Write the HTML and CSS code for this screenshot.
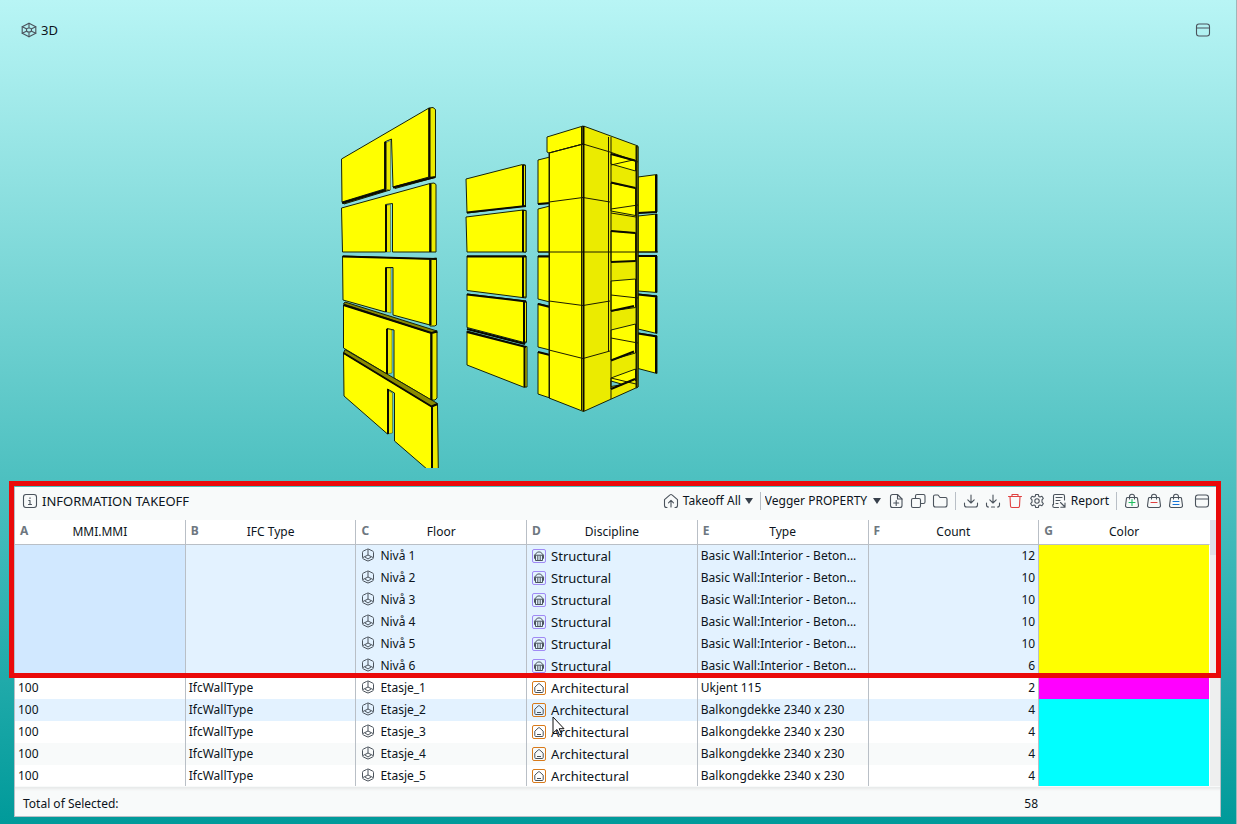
FILE: index.html
```html
<!DOCTYPE html>
<html lang="en">
<head>
<meta charset="utf-8">
<title>Information Takeoff</title>
<link rel="stylesheet" href="styles.css">
</head>
<body>
<svg class="defs" aria-hidden="true">
  <symbol id="i-window" viewBox="0 0 16 16"><rect x="1.5" y="2" width="13" height="12" rx="2.5"/><path d="M1.5 6h13"/></symbol>
  <symbol id="i-3d" viewBox="0 0 16 16"><path d="M8 1.200l6.800 3.600v6.400L8 14.800l-6.800-3.600V4.800z"/><path d="M8 1.200v4.600M8 10.200v4.600M1.200 4.800L14.800 11.200M14.800 4.800L1.200 11.200"/><ellipse class="hub" cx="8" cy="8" rx="2.600" ry="2"/></symbol>
  <symbol id="i-info" viewBox="0 0 16 16"><rect x="1.500" y="1.500" width="13" height="13" rx="2.500"/><path d="M6.800 7.500H8v4M6.500 11.500h3M8 4.800v.7"/></symbol>
  <symbol id="i-takeoff" viewBox="0 0 16 16"><path d="M4 14.500H3.500a2 2 0 0 1-2-2V6.600L7 1.900a1.500 1.500 0 0 1 2 0l5.500 4.700v5.900a2 2 0 0 1-2 2H12"/><path d="M8 14V7.500M5.500 9.800L8 7.300l2.500 2.500"/></symbol>
  <symbol id="i-new" viewBox="0 0 16 16"><path d="M9.500 1.500h-5a2 2 0 0 0-2 2v9a2 2 0 0 0 2 2h7.500a2 2 0 0 0 2-2V6z"/><path d="M9.500 1.500V6H14M8.200 7.500v5M5.700 10h5"/></symbol>
  <symbol id="i-copy" viewBox="0 0 16 16"><path d="M5.500 5.500V3a1.500 1.500 0 0 1 1.500-1.500h6.500A1.500 1.500 0 0 1 15 3v6a1.500 1.500 0 0 1-1.500 1.500h-3"/><rect x="1.500" y="5.500" width="9" height="9" rx="1.500"/></symbol>
  <symbol id="i-folder" viewBox="0 0 16 16"><path d="M1.500 12V3.500A1.500 1.500 0 0 1 3 2h3l2 2.500h5.500A1.500 1.500 0 0 1 15 6v6a2 2 0 0 1-2 2H3.500a2 2 0 0 1-2-2z"/></symbol>
  <symbol id="i-down" viewBox="0 0 16 16"><path d="M8 2v8M4.800 6.800L8 10l3.200-3.200M1.500 10v2a2 2 0 0 0 2 2h9a2 2 0 0 0 2-2v-2"/></symbol>
  <symbol id="i-downdash" viewBox="0 0 16 16"><path d="M8 2v8M4.800 6.800L8 10l3.200-3.200M1.500 10v2a2 2 0 0 0 2 2M14.500 10v2a2 2 0 0 1-2 2M6.500 14h3"/></symbol>
  <symbol id="i-trash" viewBox="0 0 16 16"><path d="M1.500 3.500h13M5 3.500v-2h6v2M3 3.500l.5 9.500a1.500 1.500 0 0 0 1.500 1.500h6a1.500 1.500 0 0 0 1.500-1.500L13 3.500"/></symbol>
  <symbol id="i-gear" viewBox="0 0 16 16"><path d="M6.700 1.500h2.600l.5 1.900 1.200.6 1.900-.7 1.400 2-1.300 1.600v2.200l1.300 1.600-1.400 2-1.900-.7-1.200.6-.5 1.900H6.700l-.5-1.900-1.200-.6-1.900.7-1.400-2L3 9.100V6.900L1.700 5.300l1.400-2 1.900.7 1.200-.6z"/><circle cx="8" cy="8" r="2.200"/></symbol>
  <symbol id="i-report" viewBox="0 0 16 16"><path d="M13.500 7V3A1.500 1.500 0 0 0 12 1.500H4A1.500 1.500 0 0 0 2.500 3v8.500H1.800v1.500A1.500 1.500 0 0 0 3.300 14.500H7.500M5 4.500h6M5 7.500h4M5 10.500h2M9.500 9.500l4.500 4.500M14 10v4.200H9.800"/></symbol>
  <symbol id="i-bag" viewBox="0 0 16 16"><path d="M3.500 4.500h9a1 1 0 0 1 1 .8l1 7.200a1.800 1.800 0 0 1-1.800 2H3.300a1.800 1.800 0 0 1-1.800-2l1-7.200a1 1 0 0 1 1-.8zM5.500 6V3.700a2.500 2.500 0 0 1 5 0V6"/></symbol>
  <symbol id="i-floor" viewBox="0 0 14 14"><path d="M5.500 1.500L2.500 3a1.500 1.500 0 0 0-1 1.400v5.200A1.500 1.500 0 0 0 2.500 11L6 12.700a2 2 0 0 0 2 0L11.500 11a1.500 1.500 0 0 0 1-1.400V4.400a1.500 1.500 0 0 0-1-1.400L8 1.300a2 2 0 0 0-2 0zM7 1.500v5.500M2 9.500l5-2.500 5 2.500M4 9l3 2 3-2"/></symbol>
  <symbol id="i-str" viewBox="0 0 16 16"><rect class="tile" x="1.500" y="1.500" width="13" height="13" rx="1.500"/><path d="M3.500 7.200L6.500 4h3l3 3.200zM4.500 7.200v5.300h7V7.200M6.800 7.500v5M9.200 7.500v5M3.500 7.200v3.500M12.500 7.200v3.500"/></symbol>
  <symbol id="i-arc" viewBox="0 0 16 16"><rect class="tile" x="1.500" y="1.500" width="13" height="13" rx="1.500"/><path d="M3.800 11.500V7.200L7.200 4a1.200 1.200 0 0 1 1.600 0l3.400 3.200v4.300a1 1 0 0 1-1 1H4.800a1 1 0 0 1-1-1zM6 10.500h4"/></symbol>
</svg>

<main class="app">
  <section class="viewer">
    <header class="viewer-head">
      <svg class="icon"><use href="#i-3d"/></svg>
      <h1 class="title">3D</h1>
      <button class="tool push" aria-label="Maximize view"><svg class="icon"><use href="#i-window"/></svg></button>
    </header>
    <svg class="model" viewBox="330 100 340 368" role="img" aria-label="3D model of selected walls">
      <g class="f">
        <path class="o" d="M342 202l44-13 4 1-46 14zM393 186l36-9 6 .5-40 11z"/>
        <path d="M341.500 159L429 108v69l-36 10-1.500-48-7 3v47L342 202z"/>
        <path class="s" d="M429 108l4-.5 2.500 2v68l-6.500-.5z"/>
        <path class="s e" d="M385 143l5.500-2.500V190l-5.500-.5z"/>
        <path d="M341.500 208L430 183.500V252h-37.500v-48.500l-7 1V252h-43z"/>
        <path class="s" d="M430 183.500l4-.5 2 1.500V252h-6z"/>
        <path class="s e" d="M385.500 205.500l5-1V252h-5z"/>
        <path d="M342.500 256l87.500 3v66l-37-10v-47.500h-7.500V312L343 300z"/>
        <path class="s" d="M430 259l6.500-1v67l-2 1h-4.500z"/>
        <path class="s e" d="M386 268h5v45l-5-1z"/>
        <path d="M343.500 305l87.500 28v67l-37-22v-48l-7-1.500V374l-43.500-26z"/>
        <path class="s" d="M431 333l6-1v66l-2 2h-4z"/>
        <path class="s e" d="M387 329l5 1v43l-5 1z"/>
        <path class="o" d="M343.500 304l1.500-2 92 29-6 2z"/>
        <path d="M343.500 353l88 53v67L394.500 441v-48l-7-4v45L344 396z"/>
        <path class="s" d="M431.500 406.500l6-2 .8 65h-6.800z"/>
        <path class="s e" d="M387.500 390l5 3v40l-5 1z"/>
        <path class="o" d="M343.500 353l1.500-3.500 92.500 54-6 3z"/>
      </g>
      <g class="k">
        <path d="M342 203l44-13M393 187.500l42-10.500M429.500 108v69M385.500 142v47M430.500 184v68M386 205v47M343 256.500l93 2.500M430.500 259v66M386 268v44M343.500 305l88 28 6-1.500M431.500 333v67M387 329v45M343.500 353l88 53.500 6-2.500M432 406v62M388 389v45"/>
      </g>
      <g class="f">
        <path d="M466 179l56.500-14.500 3 .5v41L467 213z"/><path d="M466 217l57-7 3 .5V252h-59z"/>
        <path d="M467 256h59v42l-59-7.500z"/><path d="M467 294l59 7v42l-59-15.500z"/><path d="M467 331l59.500 16v39l-2 1.500L467 365z"/>
        <path class="s" d="M523.500 165l2 .5v41h-2zM523.500 210.500h2.500V252h-2.500zM523.500 256h2.500v41h-2.500zM524 301.500l2.500.5v40H524zM524.500 347l2.500-.5V387h-2.500z"/>
        <path d="M538 160l12-3v46.500l-12 .5zM538 209l12-3v46h-12zM538 256h12v46l-12-3zM538 303.500l12 3V350l-12-3zM538 352l12 3v43l-12-4z"/>
        <path d="M638 177l19-2.500V212l-19 1zM638 216l19-2v38h-19zM638 255.500l19 .5v36.500l-19-1.500zM638 294l19 2v37.500l-19-4.500zM638 333l19 3v37.500l-19-5z"/>
      </g>
      <g class="k">
        <path d="M467 212.500l59-6.500M523 165v42M523 210v42M467 256.500h59M523 256v42M467 294.500l59 7M524 301v42M467 332l59 15M524.500 347v40M467 329l58 15M538 204l12-1M538 256.500h12M538 304l12 3M538 352l12 3M638 213l19-1M656 175v37M656 214v38M638 256h19M656 256v36M638 294.500l19 2M656 296v37M638 333.500l19 3M656 336v37"/>
      </g>
      <g class="f">
        <path d="M547 137l36-11v18l-34 9-2-1z"/>
        <path d="M549 153l34.500-9v267.500L549 398z"/>
        <path class="s" d="M583.500 126l54.500 20v241l-54.500 24.500z"/>
        <path d="M611 154l24.500 7v10L611 164zM611 183l24.500 5v27.500l-24.500-4.500zM611 231l24.500 2v28.500H611zM611 281l24.500-2v28.500L611 311zM611 330l24.500-6v29L611 360zM611 378l24.500-9v10L611 389z"/>
        <path class="sky" d="M611 381l12 3.500-12 2z"/>
        <path class="o" d="M636 146l2 1v240l-2 1z"/>
      </g>
      <g class="l">
        <path d="M549 153l34-9 27 8 28 10M549 202l34-4.500 27 4.500M538 252h120M549 301l34 4.500 27-4.500M549 350l34 8.500 27-7.500M549.500 153v245M608.500 137v214M611 137v262M635.500 160v11M635.500 188v28M635.500 233v28M635.500 279v28M635.500 324v29M635.500 369v12M611 165l22-5M611 209l27-4M611 213l25 4M611 295l27 3M611 338l27 5M611 378l25 6M636.500 146v241M581.500 127v283"/>
      </g>
      <g class="k">
        <path d="M583.500 126v285M611 154l24 6.500M611 182.500l24.500 5.500M611 231l24.500 2M611 262l24.500-1M611 311l23-5M611 360.500l23-9M611 389l24-10"/>
      </g>
    </svg>
  </section>

  <section class="panel" aria-label="Information takeoff">
    <header class="bar">
      <svg class="icon"><use href="#i-info"/></svg>
      <h2 class="title">INFORMATION TAKEOFF</h2>
      <button class="tool text push" aria-haspopup="menu"><svg class="icon"><use href="#i-takeoff"/></svg><span>Takeoff All</span><svg class="caret" viewBox="0 0 8 6"><path d="M0 0h8L4 6z"/></svg></button>
      <span class="sep"></span>
      <label class="pick"><select aria-label="Takeoff definition"><option>Vegger PROPERTY</option></select><svg class="caret" viewBox="0 0 8 6"><path d="M0 0h8L4 6z"/></svg></label>
      <button class="tool" aria-label="New"><svg class="icon"><use href="#i-new"/></svg></button>
      <button class="tool" aria-label="Copy"><svg class="icon"><use href="#i-copy"/></svg></button>
      <button class="tool" aria-label="Open"><svg class="icon"><use href="#i-folder"/></svg></button>
      <span class="sep"></span>
      <button class="tool" aria-label="Import"><svg class="icon"><use href="#i-down"/></svg></button>
      <button class="tool" aria-label="Import selected"><svg class="icon"><use href="#i-downdash"/></svg></button>
      <button class="tool red" aria-label="Delete"><svg class="icon"><use href="#i-trash"/></svg></button>
      <button class="tool" aria-label="Settings"><svg class="icon"><use href="#i-gear"/></svg></button>
      <button class="tool text"><svg class="icon"><use href="#i-report"/></svg><span>Report</span></button>
      <span class="sep"></span>
      <button class="tool" aria-label="Add to basket"><svg class="icon" viewBox="0 0 16 16"><use href="#i-bag"/><path class="plus" d="M8 6.500v6M5 9.500h6"/></svg></button>
      <button class="tool" aria-label="Remove from basket"><svg class="icon" viewBox="0 0 16 16"><use href="#i-bag"/><path class="minus" d="M5 9.500h6"/></svg></button>
      <button class="tool" aria-label="Set basket"><svg class="icon" viewBox="0 0 16 16"><use href="#i-bag"/><path class="equal" d="M5 8.500h6M5 11.500h6"/></svg></button>
      <button class="tool last" aria-label="Maximize panel"><svg class="icon"><use href="#i-window"/></svg></button>
    </header>

    <div class="sheet">
      <div class="gridbox">
      <table class="grid">
        <thead><tr>
          <th><div class="col"><b>A</b><span>MMI.MMI</span></div></th><th><div class="col"><b>B</b><span>IFC Type</span></div></th><th><div class="col"><b>C</b><span>Floor</span></div></th><th><div class="col"><b>D</b><span>Discipline</span></div></th><th><div class="col"><b>E</b><span>Type</span></div></th><th><div class="col"><b>F</b><span>Count</span></div></th><th><div class="col"><b>G</b><span>Color</span></div></th>
        </tr></thead>
        <tbody>
          <tr class="on"><td class="focus"></td><td></td><td><svg class="fl"><use href="#i-floor"/></svg>Nivå 1</td><td class="disc"><svg class="di st"><use href="#i-str"/></svg>Structural</td><td>Basic Wall:Interior - Beton...</td><td class="num">12</td><td class="yellow"></td></tr>
          <tr class="on"><td class="focus"></td><td></td><td><svg class="fl"><use href="#i-floor"/></svg>Nivå 2</td><td class="disc"><svg class="di st"><use href="#i-str"/></svg>Structural</td><td>Basic Wall:Interior - Beton...</td><td class="num">10</td><td class="yellow"></td></tr>
          <tr class="on"><td class="focus"></td><td></td><td><svg class="fl"><use href="#i-floor"/></svg>Nivå 3</td><td class="disc"><svg class="di st"><use href="#i-str"/></svg>Structural</td><td>Basic Wall:Interior - Beton...</td><td class="num">10</td><td class="yellow"></td></tr>
          <tr class="on"><td class="focus"></td><td></td><td><svg class="fl"><use href="#i-floor"/></svg>Nivå 4</td><td class="disc"><svg class="di st"><use href="#i-str"/></svg>Structural</td><td>Basic Wall:Interior - Beton...</td><td class="num">10</td><td class="yellow"></td></tr>
          <tr class="on"><td class="focus"></td><td></td><td><svg class="fl"><use href="#i-floor"/></svg>Nivå 5</td><td class="disc"><svg class="di st"><use href="#i-str"/></svg>Structural</td><td>Basic Wall:Interior - Beton...</td><td class="num">10</td><td class="yellow"></td></tr>
          <tr class="on"><td class="focus"></td><td></td><td><svg class="fl"><use href="#i-floor"/></svg>Nivå 6</td><td class="disc"><svg class="di st"><use href="#i-str"/></svg>Structural</td><td>Basic Wall:Interior - Beton...</td><td class="num">6</td><td class="yellow"></td></tr>
          <tr><td>100</td><td>IfcWallType</td><td><svg class="fl"><use href="#i-floor"/></svg>Etasje_1</td><td class="disc"><svg class="di ar"><use href="#i-arc"/></svg>Architectural</td><td>Ukjent 115</td><td class="num">2</td><td class="magenta"></td></tr>
          <tr class="on"><td>100</td><td>IfcWallType</td><td><svg class="fl"><use href="#i-floor"/></svg>Etasje_2</td><td class="disc"><svg class="di ar"><use href="#i-arc"/></svg>Architectural</td><td>Balkongdekke 2340 x 230</td><td class="num">4</td><td class="cyan"></td></tr>
          <tr><td>100</td><td>IfcWallType</td><td><svg class="fl"><use href="#i-floor"/></svg>Etasje_3</td><td class="disc"><svg class="di ar"><use href="#i-arc"/></svg>Architectural</td><td>Balkongdekke 2340 x 230</td><td class="num">4</td><td class="cyan"></td></tr>
          <tr class="alt"><td>100</td><td>IfcWallType</td><td><svg class="fl"><use href="#i-floor"/></svg>Etasje_4</td><td class="disc"><svg class="di ar"><use href="#i-arc"/></svg>Architectural</td><td>Balkongdekke 2340 x 230</td><td class="num">4</td><td class="cyan"></td></tr>
          <tr><td>100</td><td>IfcWallType</td><td><svg class="fl"><use href="#i-floor"/></svg>Etasje_5</td><td class="disc"><svg class="di ar"><use href="#i-arc"/></svg>Architectural</td><td>Balkongdekke 2340 x 230</td><td class="num">4</td><td class="cyan"></td></tr>
        </tbody>
      </table>
      </div>
      <div class="scroll"><div class="thumb"></div></div>
    </div>

    <footer class="totals"><span>Total of Selected:</span><span class="sum">58</span></footer>
    <div class="frame"></div>
    <svg class="cursor" viewBox="0 0 13 21"><path d="M1 1v16l4-3.500 2.500 5.500 2-1-2.300-5.300H12z"/></svg>
  </section>
</main>
</body>
</html>
```
FILE: styles.css
```css
* { box-sizing: border-box; }
body { margin: 0; font: 12px/18px "Noto Sans", sans-serif; color: #0c1420; }
.defs { position: absolute; width: 0; height: 0; }
.app {
  display: flex; flex-direction: column; min-height: 100vh;
  padding: 0 15px 7px 14px;
  border-right: 1px solid #9fb5b8;
  background: linear-gradient(#b8f5f5, #009a9a);
}
.viewer { flex: 1; display: flex; flex-direction: column; }
.viewer-head { display: flex; align-items: center; gap: 4px; height: 60px; padding: 0 7px; }
.title { margin: 0; font-size: 13px; font-weight: 400; }
.push { margin-left: auto; }
.model { width: 340px; height: 368px; margin: 40px 0 0 316px; stroke-linejoin: round; }
.f { fill: #ffff00; stroke: #16220a; stroke-width: 1; }
.s { fill: #ebeb00; }
.e { stroke-width: .4; }
.o { fill: #8a8a00; }
.sky { fill: #6ccaca; }
.k { fill: none; stroke: #0a0a00; stroke-width: 2; }
.l { fill: none; stroke: #1c1c00; stroke-width: 1; }

.icon { width: 16px; height: 16px; flex: none; fill: none; stroke: #4b535c; stroke-width: 1.1px; stroke-linecap: round; stroke-linejoin: round; }
.hub { fill: #b0f0f0; }
.caret { width: 8px; height: 6px; fill: #37404b; }
.panel { position: relative; border: 1px solid #b9bfc6; border-top: 0; background: #f8fafa; }
.bar { display: flex; align-items: center; height: 33px; padding: 0 7px 5px; }
.bar .title { margin-left: 4px; }
.tool { display: flex; align-items: center; justify-content: center; width: 22px; height: 22px; padding: 0; border: 0; background: none; font: inherit; color: inherit; }
.tool.text { width: auto; gap: 4px; padding: 0 3px; }
.red .icon { stroke: #e04040; }
.icon .plus { stroke: #1fbf5f; }
.icon .minus { stroke: #e04040; }
.icon .equal { stroke: #1673d6; }
.sep { width: 1px; height: 18px; margin: 0 4px; background: #b9bfc6; }
.pick { display: flex; align-items: center; gap: 5px; margin-right: 4px; }
.pick select { appearance: none; padding: 0; border: 0; background: none; font: inherit; color: inherit; }
.last { margin-left: 4px; }

.sheet { display: flex; height: 266px; overflow: hidden; }
.gridbox { flex: 1; min-width: 0; }
.grid { width: 100%; table-layout: fixed; border-collapse: separate; border-spacing: 0; background: #fff; }
.grid th { height: 25px; padding: 0; border-right: 1px solid #b9bfc6; border-bottom: 1px solid #b9bfc6; font-weight: 400; }
.col { display: grid; grid-template-columns: 16px 1fr 16px; padding: 0 5px; }
.col b { line-height: 22px; color: #6e7780; text-align: left; }
.col span { line-height: 24px; }
.grid td { height: 22px; padding: 0 3px; border-right: 1px solid #b9bfc6; white-space: nowrap; overflow: hidden; line-height: 22px; }
.grid th:last-child, .grid td:last-child { border-right-color: #fff; }
.grid .disc { font-size: 13px; }
.on { background: #e3f2ff; }
.alt { background: #f8fafa; }
.grid td.focus { background: #d1e8ff; }
.grid .num { text-align: right; }
.yellow { background: #ffff00; background-clip: padding-box; }
.magenta { background: #ff00ff; background-clip: padding-box; }
.cyan { background: #00ffff; background-clip: padding-box; }
.fl, .di { vertical-align: middle; fill: none; stroke: #4b535c; stroke-width: 1px; }
.fl { width: 14px; height: 14px; margin: 0 5px 3px 2px; }
.di { width: 16px; height: 16px; margin: 0 4px 3px 1px; }
.st { --tile: #a08af5; }
.ar { --tile: #d97a1a; }
.tile { stroke: var(--tile); }
.scroll { width: 10px; background: #eeefef; }
.thumb { height: 35px; background: #dfe1e6; }

.totals { display: flex; height: 30px; padding: 5px 182px 0 8px; border-top: 1px solid #f8fafa; box-shadow: inset 0 4px 3px -2px #e6e8e8; line-height: 24px; }
.sum { margin-left: auto; }
.frame { position: absolute; top: -6px; left: -6px; right: -1px; height: 197px; border: 5px solid #ea0a0a; pointer-events: none; }
.cursor { position: absolute; left: 537px; top: 229px; width: 13px; height: 21px; fill: #fff; stroke: #111; }
```
